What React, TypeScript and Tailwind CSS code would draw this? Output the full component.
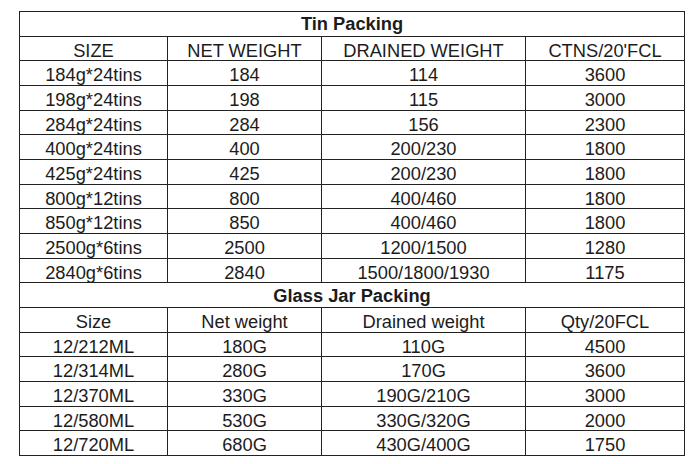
const tinRows = [
  ['184g*24tins', '184', '114', '3600'],
  ['198g*24tins', '198', '115', '3000'],
  ['284g*24tins', '284', '156', '2300'],
  ['400g*24tins', '400', '200/230', '1800'],
  ['425g*24tins', '425', '200/230', '1800'],
  ['800g*12tins', '800', '400/460', '1800'],
  ['850g*12tins', '850', '400/460', '1800'],
  ['2500g*6tins', '2500', '1200/1500', '1280'],
  ['2840g*6tins', '2840', '1500/1800/1930', '1175'],
];

const jarRows = [
  ['12/212ML', '180G', '110G', '4500'],
  ['12/314ML', '280G', '170G', '3600'],
  ['12/370ML', '330G', '190G/210G', '3000'],
  ['12/580ML', '530G', '330G/320G', '2000'],
  ['12/720ML', '680G', '430G/400G', '1750'],
];

function Row({ cells }: { cells: string[] }) {
  return (
    <tr className="h-[24.67px]">
      {cells.map((c, i) => (
        <td key={i} className="border border-[#222] text-center align-top p-0 pt-[5px] leading-[18px] whitespace-nowrap">
          {c}
        </td>
      ))}
    </tr>
  );
}

function Title({ text, pt }: { text: string; pt: string }) {
  return (
    <tr className="h-[24.67px]">
      <td colSpan={4} className={`border border-[#222] text-center align-top font-bold leading-[18px] p-0 ${pt}`}>
        {text}
      </td>
    </tr>
  );
}

export default function App() {
  return (
    <div className="w-[700px] h-[464px] bg-white pl-[19px] pt-[11px]" style={{ fontFamily: '"Liberation Sans", Arial, sans-serif' }}>
      <table className="table-fixed border-collapse text-[18.3px] text-[#1c1c1c] w-[665px]">
        <colgroup>
          <col className="w-[148px]" />
          <col className="w-[154px]" />
          <col className="w-[204px]" />
          <col className="w-[159px]" />
        </colgroup>
        <tbody>
          <Title text="Tin Packing" pt="pt-[3px]" />
          <Row cells={['SIZE', 'NET WEIGHT', 'DRAINED WEIGHT', "CTNS/20'FCL"]} />
          {tinRows.map((r) => (
            <Row key={r[0]} cells={r} />
          ))}
          <Title text="Glass Jar Packing" pt="pt-[4px]" />
          <Row cells={['Size', 'Net weight', 'Drained weight', 'Qty/20FCL']} />
          {jarRows.map((r) => (
            <Row key={r[0]} cells={r} />
          ))}
        </tbody>
      </table>
    </div>
  );
}
